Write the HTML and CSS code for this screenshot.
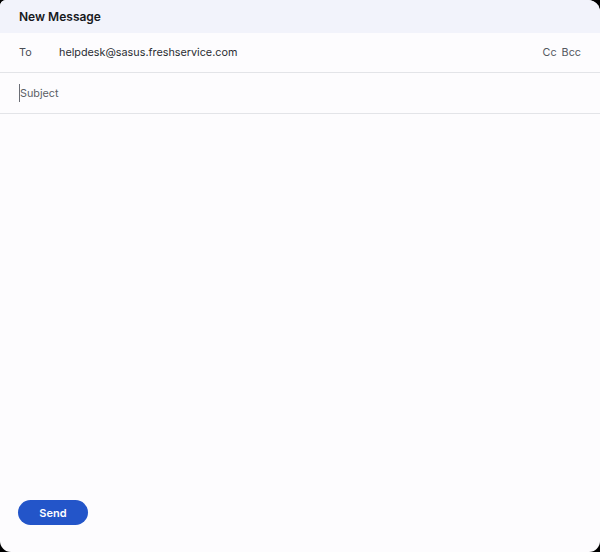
FILE: index.html
```html
<!DOCTYPE html>
<html lang="en">
<head>
    <meta charset="UTF-8">
    <meta name="viewport" content="width=device-width, initial-scale=1.0">
    <title>New Message</title>
    <link rel="stylesheet" href="styles.css">
</head>
<body>
    <!-- compose window -->
    <div class="compose">
        <div class="compose-head">New Message</div>

        <div class="field to-row">
            <span class="label">To</span>
            <span class="address">helpdesk@sasus.freshservice.com</span>
            <span class="copy-links"><span>Cc</span><span>Bcc</span></span>
        </div>

        <div class="field subject-row">
            <span class="caret"></span><span class="placeholder">Subject</span>
        </div>

        <div class="compose-body"></div>

        <div class="compose-foot">
            <button class="send-btn">Send</button>
        </div>
    </div>
</body>
</html>
```

FILE: styles.css
```css
html, body {
    margin: 0;
    padding: 0;
    background: #000;
}

body {
    font-family: Inter, "Noto Sans", sans-serif;
    color: #1d1f24;
}

.compose {
    width: 600px;
    height: 552px;
    background: #fdfcfe;
    border-radius: 6px 12px 11px 11px;
    overflow: hidden;
    display: flex;
    flex-direction: column;
}

.compose-head {
    height: 33px;
    background: #f2f3fb;
    padding: 0 19px;
    display: flex;
    align-items: center;
    font-size: 12px;
    font-weight: 600;
    color: #17191d;
}

.field {
    display: flex;
    align-items: center;
    padding: 0 19px;
    border-bottom: 1px solid #e3e4e8;
    font-size: 10.8px;
}

.to-row {
    height: 39px;
}

.to-row .label {
    width: 40px;
    color: #4a4d55;
}

.to-row .address {
    flex: 1;
    color: #2b2d33;
}

.copy-links {
    display: flex;
    gap: 5px;
    color: #54575f;
}

.subject-row {
    height: 40px;
}

.caret {
    width: 1px;
    height: 18px;
    background: #6b6e76;
}

.placeholder {
    color: #5b5e66;
}

.compose-body {
    flex: 1;
}

.compose-foot {
    padding: 0 18px 27px;
}

.send-btn {
    width: 70px;
    height: 25px;
    border: none;
    border-radius: 13px;
    background: #2355c9;
    color: #fff;
    font-family: Inter, "Noto Sans", sans-serif;
    font-size: 11px;
    font-weight: 600;
    padding: 0;
}
```
